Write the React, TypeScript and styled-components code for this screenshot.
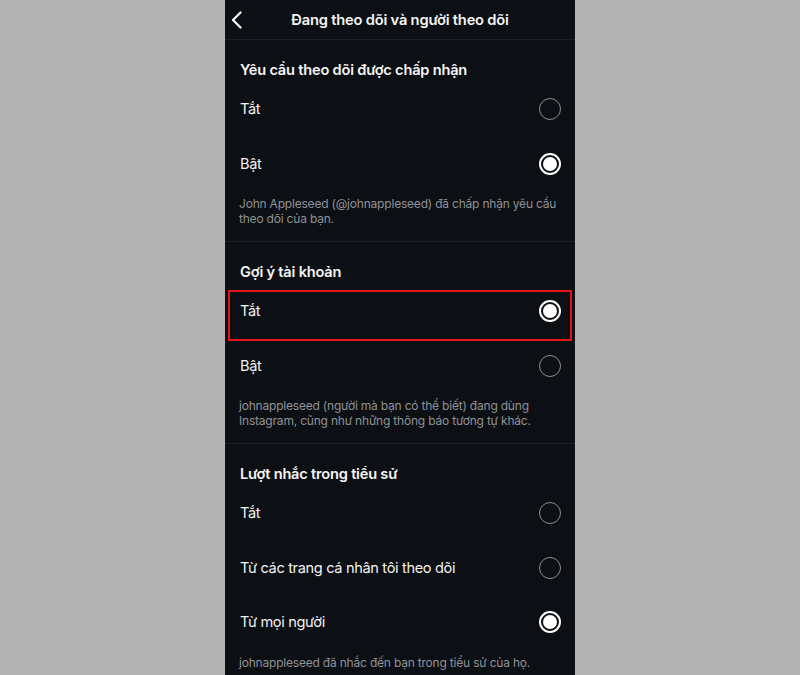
import React from "react";
import styled, { createGlobalStyle } from "styled-components";

const Global = createGlobalStyle`
  html, body { margin: 0; padding: 0; background: #b3b3b3; }
  body { font-family: Inter, "Noto Sans", sans-serif; -webkit-font-smoothing: antialiased; }
`;

const Page = styled.div`
  width: 800px;
  height: 675px;
  display: flex;
  justify-content: center;
  overflow: hidden;
  background: #b3b3b3;
`;

const Phone = styled.div`
  width: 350px;
  height: 675px;
  background: #0c0f13;
  display: flex;
  flex-direction: column;
  overflow: hidden;
`;

const Header = styled.header`
  height: 39px;
  flex-shrink: 0;
  display: grid;
  grid-template-columns: 40px 1fr 40px;
  align-items: center;
  border-bottom: 1px solid #1b1e23;
`;

const BackButton = styled.button`
  background: none;
  border: none;
  padding: 0 0 0 6px;
  height: 39px;
  display: flex;
  align-items: center;
  cursor: pointer;
`;

const HeaderTitle = styled.h1`
  margin: 0;
  text-align: center;
  font-size: 14.7px;
  font-weight: 600;
  color: #f5f5f5;
  letter-spacing: -0.2px;
`;

const Section = styled.section<{ $last?: boolean }>`
  padding: 20px 0 15px;
  border-bottom: ${(p) => (p.$last ? "none" : "1px solid #1b1e23")};
`;

const SectionTitle = styled.h2`
  margin: 0 0 2px;
  padding: 0 15px;
  font-size: 14.6px;
  line-height: 20px;
  font-weight: 600;
  color: #f5f5f5;
  letter-spacing: -0.2px;
`;

const Row = styled.label<{ $highlight?: boolean }>`
  position: relative;
  height: 54.5px;
  display: flex;
  align-items: center;
  justify-content: space-between;
  padding: 0 14px 0 15px;
  font-size: 14.6px;
  letter-spacing: -0.35px;
  color: #f2f2f2;
  cursor: pointer;
  &::after {
    content: "";
    display: ${(p) => (p.$highlight ? "block" : "none")};
    position: absolute;
    left: 3px;
    right: 3px;
    top: 6px;
    bottom: -2px;
    border: 2px solid #e5141b;
  }
`;

const Radio = styled.span<{ $checked?: boolean }>`
  width: 22px;
  height: 22px;
  box-sizing: border-box;
  border-radius: 50%;
  border: ${(p) => (p.$checked ? "2px solid #ffffff" : "1.5px solid #8c8d90")};
  display: flex;
  align-items: center;
  justify-content: center;
  &::before {
    content: "";
    width: 14px;
    height: 14px;
    border-radius: 50%;
    background: #ffffff;
    display: ${(p) => (p.$checked ? "block" : "none")};
  }
`;

const Description = styled.p`
  margin: 5px 0 0;
  padding: 0 12px 0 14px;
  font-size: 12px;
  letter-spacing: -0.2px;
  line-height: 15px;
  color: #8f9297;
`;

type Option = { label: string; checked?: boolean; highlight?: boolean };
type SectionData = { title: string; options: Option[]; desc: string };

const sections: SectionData[] = [
  {
    title: "Yêu cầu theo dõi được chấp nhận",
    options: [{ label: "Tắt" }, { label: "Bật", checked: true }],
    desc: "John Appleseed (@johnappleseed) đã chấp nhận yêu cầu theo dõi của bạn.",
  },
  {
    title: "Gợi ý tài khoản",
    options: [{ label: "Tắt", checked: true, highlight: true }, { label: "Bật" }],
    desc: "johnappleseed (người mà bạn có thể biết) đang dùng Instagram, cũng như những thông báo tương tự khác.",
  },
  {
    title: "Lượt nhắc trong tiểu sử",
    options: [
      { label: "Tắt" },
      { label: "Từ các trang cá nhân tôi theo dõi" },
      { label: "Từ mọi người", checked: true },
    ],
    desc: "johnappleseed đã nhắc đến bạn trong tiểu sử của họ.",
  },
];

export default function App() {
  return (
    <>
      <Global />
      <Page>
        <Phone>
          <Header>
            <BackButton aria-label="Quay lại">
              <svg width="12" height="18" viewBox="0 0 12 18" fill="none">
                <path d="M9.5 1.5 L2 9 L9.5 16.5" stroke="#ffffff" strokeWidth="2.2" strokeLinecap="round" strokeLinejoin="round" />
              </svg>
            </BackButton>
            <HeaderTitle>Đang theo dõi và người theo dõi</HeaderTitle>
            <span />
          </Header>
          {sections.map((s, i) => (
            <Section key={s.title} $last={i === sections.length - 1}>
              <SectionTitle>{s.title}</SectionTitle>
              {s.options.map((o) => (
                <Row key={o.label} $highlight={o.highlight}>
                  <span>{o.label}</span>
                  <Radio $checked={o.checked} />
                </Row>
              ))}
              <Description>{s.desc}</Description>
            </Section>
          ))}
        </Phone>
      </Page>
    </>
  );
}
